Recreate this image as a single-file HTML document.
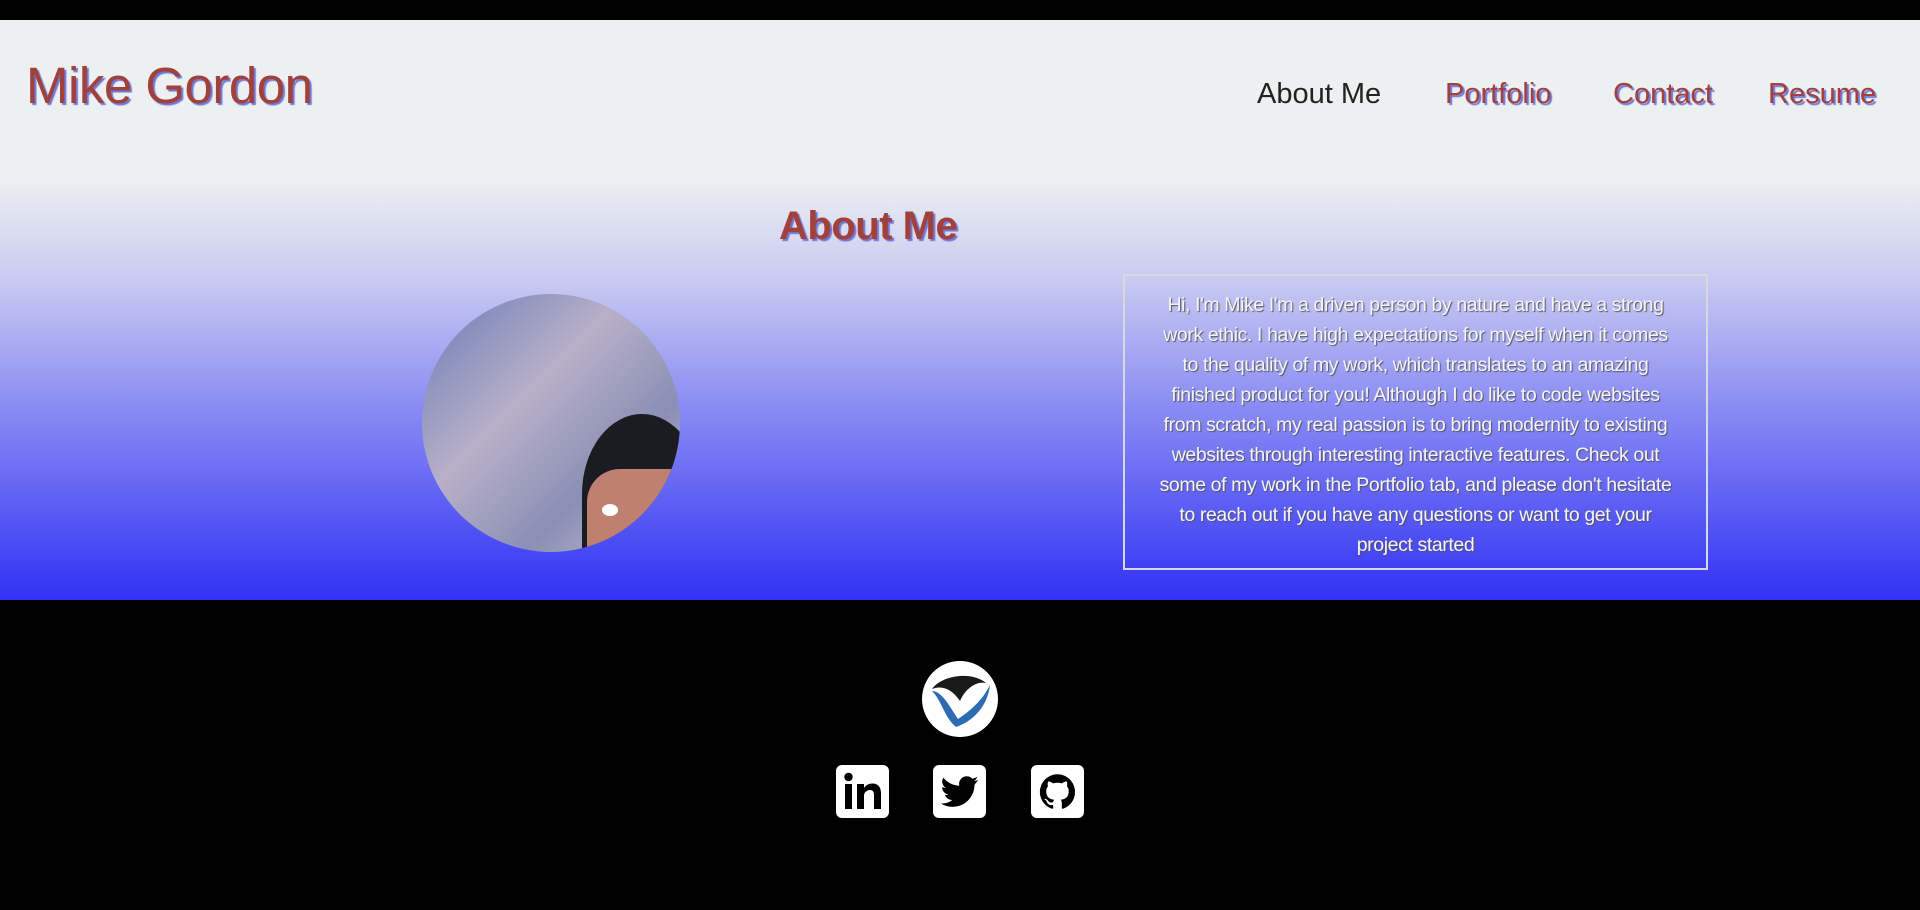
<!DOCTYPE html>
<html><head><meta charset="utf-8"><style>
*{margin:0;padding:0;box-sizing:border-box}
body{width:1920px;height:910px;overflow:hidden;background:#000;font-family:"Liberation Sans",sans-serif;position:relative}
.top{position:absolute;left:0;top:20px;width:1920px;height:580px;background:linear-gradient(#ecf0f1 0px,#ecf0f1 160px,#c9caf1 260px,#8d8ff3 380px,#3132f5 580px)}
.t{position:absolute;white-space:nowrap;color:#a2403a;text-shadow:2px 2px 1px #6f76d6}
h1.t{left:26px;top:56px;font-size:51px;font-weight:normal;letter-spacing:-0.5px}
.nav{font-size:29px;top:78px;letter-spacing:0px}
.h2{left:779px;top:204px;font-size:40px;font-weight:bold;letter-spacing:-0.5px}
.pic{position:absolute;left:422px;top:294px;width:258px;height:258px;border-radius:50%;overflow:hidden;background:linear-gradient(135deg,#6b7ab8,#b8b0c8 40%,#8a8fb5 70%,#cfc4d0)}
.box{position:absolute;left:1123px;top:274px;width:585px;height:296px;border:2px solid #d8d8e0;color:#f4f4ff;text-shadow:1px 1px 1px #555;font-size:19.5px;line-height:30px;text-align:center;padding:14px 34px;letter-spacing:-0.4px}
.ic{position:absolute;top:765px;width:53px;height:53px;background:#fff;border-radius:6px}
</style></head><body>
<div class="top"></div>
<h1 class="t">Mike Gordon</h1>
<div class="t nav" style="left:1257px;color:#222;text-shadow:none">About Me</div>
<div class="t nav" style="left:1445px">Portfolio</div>
<div class="t nav" style="left:1613px">Contact</div>
<div class="t nav" style="left:1768px">Resume</div>
<div class="t h2">About Me</div>
<div class="pic">
<div style="position:absolute;left:160px;top:120px;width:120px;height:160px;border-radius:50% 50% 0 0;background:#1b1b22"></div>
<div style="position:absolute;left:165px;top:175px;width:110px;height:110px;background:#c08070;border-radius:30% 0 0 0"></div>
<div style="position:absolute;left:180px;top:210px;width:16px;height:12px;border-radius:50%;background:#fff"></div>
</div>
<div class="box">Hi, I'm Mike I'm a driven person by nature and have a strong work ethic. I have high expectations for myself when it comes to the quality of my work, which translates to an amazing finished product for you! Although I do like to code websites from scratch, my real passion is to bring modernity to existing websites through interesting interactive features. Check out some of my work in the Portfolio tab, and please don't hesitate to reach out if you have any questions or want to get your project started</div>
<svg style="position:absolute;left:922px;top:661px" width="76" height="76" viewBox="0 0 76 76">
<circle cx="38" cy="38" r="38" fill="#fff"/>
<path d="M10 28 C20 14 50 10 64 22 C56 20 44 26 38 40 C30 28 20 24 10 28Z" fill="#1a1a1a"/>
<path d="M10 30 C20 30 28 46 36 58 C48 50 60 40 68 24 C66 44 52 60 34 66 C22 56 20 40 10 30Z" fill="#2d6cb5"/>
</svg>
<div class="ic" style="left:836px"><svg width="53" height="53" viewBox="0 0 53 53"><rect x="9" y="19" width="7" height="25" fill="#000"/><circle cx="12.5" cy="12" r="4.2" fill="#000"/><path d="M21 19h7v4c2-3 5-4.5 8.5-4.5 6 0 8.5 4 8.5 10V44h-7V30c0-3.5-1.5-5-4-5s-6 2-6 5.5V44h-7z" fill="#000"/></svg></div>
<div class="ic" style="left:933px"><svg width="53" height="53" viewBox="0 0 24 24"><path transform="translate(3.5 3.5) scale(.71)" d="M23.950 4.57a10 10 0 0 1-2.82.77 4.96 4.960 0 0 0 2.16-2.72c-.95.56-2 .96-3.12 1.19a4.92 4.92 0 0 0-8.38 4.48A13.94 13.94 0 0 1 1.64 3.16a4.92 4.92 0 0 0 1.52 6.57 4.9 4.9 0 0 1-2.23-.61v.06a4.92 4.92 0 0 0 3.95 4.83 4.99 4.99 0 0 1-2.21.08 4.93 4.93 0 0 0 4.6 3.42A9.87 9.87 0 0 1 0 19.54a13.94 13.94 0 0 0 7.55 2.21c9.05 0 14-7.5 14-13.980-.21 0-.42-.02-.63A9.94 9.94 0 0 0 24 4.59z" fill="#000"/></svg></div>
<div class="ic" style="left:1031px"><svg width="53" height="53" viewBox="0 0 24 24"><path transform="translate(4 4) scale(.667)" d="M12 .3a12 12 0 0 0-3.8 23.38c.6.12.83-.26.83-.57L9 21.07c-3.34.72-4.040-1.61-4.04-1.61-.55-1.39-1.34-1.76-1.34-1.76-1.08-.74.09-.73.09-.73 1.2.09 1.830 1.24 1.83 1.24 1.07 1.83 2.81 1.3 3.5 1 .1-.78.42-1.31.76-1.61-2.67-.3-5.47-1.33-5.47-5.93 0-1.31.47-2.38 1.24-3.22-.14-.3-.54-1.520.1-3.18 0 0 1-.32 3.3 1.23a11.5 11.5 0 0 1 6 0c2.28-1.55 3.29-1.23 3.29-1.23.64 1.66.24 2.88.12 3.18a4.65 4.65 0 0 1 1.23 3.22c0 4.61-2.8 5.63-5.48 5.92.42.36.81 1.1.81 2.22l-.01 3.29c0 .31.2.69.82.57A12 12 0 0 0 12 .3" fill="#000"/></svg></div>
</body></html>
